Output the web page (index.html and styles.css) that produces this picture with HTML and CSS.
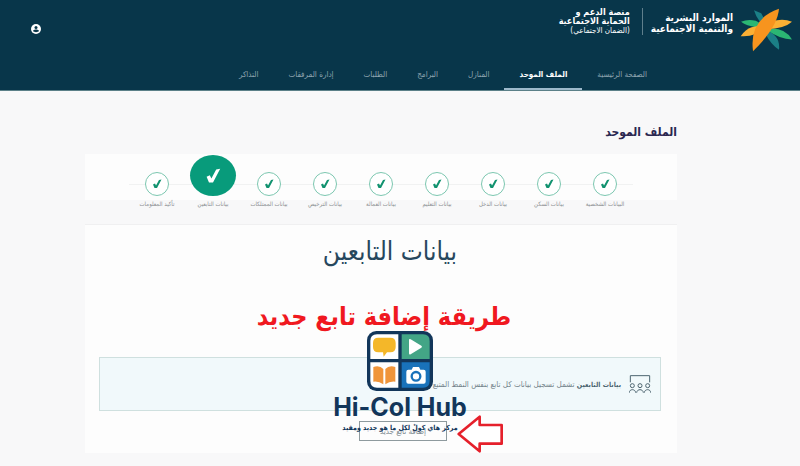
FILE: index.html
```
<!DOCTYPE html>
<html lang="ar" dir="rtl">
<head>
    <meta charset="UTF-8">
    <meta name="viewport" content="width=device-width, initial-scale=1.0">
    <title>الملف الموحد</title>
    <link rel="stylesheet" href="styles.css">
</head>
<body>
    <header class="header">
        <div class="top-bar">
            <div class="brand">
                <svg class="brand-logo" viewBox="0 0 152 124" aria-hidden="true">
                    <path fill="#1b7f86" d="M41 4 L62 13 L72 32 L58 38 Q46 22 41 4Z"/>
                    <path fill="#2bb673" d="M3 38 Q22 30 46 35 L66 46 L46 54 Q20 50 3 38Z"/>
                    <path fill="#fbb034" d="M2 80 Q16 60 34 54 L62 48 L46 74 Q24 82 2 80Z"/>
                    <path fill="#1b7f86" d="M84 66 Q118 82 114 120 Q90 104 76 76Z"/>
                    <path fill="#2bb673" d="M84 58 Q132 54 152 90 Q116 88 82 64Z"/>
                    <path fill="#fbb034" d="M92 38 Q124 26 152 38 Q130 58 78 60Z"/>
                    <path fill="#f7941e" d="M114 0 Q110 54 38 124 Q26 30 114 0Z"/>
                </svg>
                <p class="ministry">الموارد البشرية<br>والتنمية الاجتماعية</p>
                <p class="platform">منصة الدعم و<br>الحماية الاجتماعية<br><span>(الضمان الاجتماعي)</span></p>
            </div>
            <button class="account" type="button" aria-label="الحساب">
                <svg viewBox="0 0 20 20" aria-hidden="true">
                    <circle cx="10" cy="10" r="10" fill="#fff"/>
                    <circle cx="10" cy="7" r="3" fill="#08364a"/>
                    <path fill="#08364a" d="M4 14 C5 10 15 10 16 14 C14 17 6 17 4 14Z"/>
                </svg>
            </button>
        </div>
        <nav class="nav">
            <a href="#">الصفحة الرئيسية</a>
            <a href="#" class="active">الملف الموحد</a>
            <a href="#">المنازل</a>
            <a href="#">البرامج</a>
            <a href="#">الطلبات</a>
            <a href="#">إدارة المرفقات</a>
            <a href="#">التذاكر</a>
        </nav>
    </header>

    <svg class="symbols" aria-hidden="true">
        <symbol id="check" viewBox="0 0 20 20">
            <path d="M2 11 L6 9 L8 13 L14 2 L19 1 L10 18 L5 18Z"/>
        </symbol>
    </svg>

    <main class="main">
        <h1>الملف الموحد</h1>
        <div class="card">
            <ol class="steps">
                <li><span class="dot"><svg><use href="#check"/></svg></span>البيانات الشخصية</li>
                <li><span class="dot"><svg><use href="#check"/></svg></span>بيانات السكن</li>
                <li><span class="dot"><svg><use href="#check"/></svg></span>بيانات الدخل</li>
                <li><span class="dot"><svg><use href="#check"/></svg></span>بيانات التعليم</li>
                <li><span class="dot"><svg><use href="#check"/></svg></span>بيانات العمالة</li>
                <li><span class="dot"><svg><use href="#check"/></svg></span>بيانات الترخيص</li>
                <li><span class="dot"><svg><use href="#check"/></svg></span>بيانات الممتلكات</li>
                <li class="current"><span class="dot"><svg><use href="#check"/></svg></span>بيانات التابعين</li>
                <li><span class="dot"><svg><use href="#check"/></svg></span>تأكيد المعلومات</li>
            </ol>
            <section class="content">
                <h2>بيانات التابعين</h2>
                <p class="caption">طريقة إضافة تابع جديد</p>
                <div class="info">
                    <svg viewBox="0 0 66 54" fill="none" stroke="#4d6570" stroke-width="3" aria-hidden="true">
                        <path d="M4 22 V2 H62 V22"/>
                        <circle cx="10" cy="32" r="6"/>
                        <circle cx="33" cy="32" r="6"/>
                        <circle cx="56" cy="32" r="6"/>
                        <path d="M1 53 C1 41 19 41 20 53 M23 53 C24 41 42 41 43 53 M46 53 C47 41 65 41 65 53"/>
                    </svg>
                    <p><strong>بيانات التابعين</strong> تشمل تسجيل بيانات كل تابع بنفس النمط المتبع مع</p>
                </div>
                <div class="actions">
                    <svg class="arrow" viewBox="0 0 138 114" aria-hidden="true">
                        <path fill="#fff" stroke="#e5202b" stroke-width="8" stroke-linejoin="round" d="M5 57 L68 5 V30 H134 V86 H68 V109Z"/>
                    </svg>
                    <button class="add" type="button">إضافة تابع جديد</button>
                </div>
            </section>
        </div>
    </main>

    <div class="watermark">
        <svg viewBox="0 0 198 180" aria-hidden="true">
            <rect width="198" height="180" rx="28" fill="#12365a"/>
            <path fill="#fff" d="M30 10 H94 V84 H10 V30 Q10 10 30 10Z"/>
            <path fill="#43a586" d="M104 10 H168 Q188 10 188 30 V84 H104Z"/>
            <path fill="#fff" d="M10 94 H94 V170 H30 Q10 170 10 150Z"/>
            <path fill="#1972ba" d="M104 94 H188 V150 Q188 170 168 170 H104Z"/>
            <path fill="#f4b729" d="M34 20 H70 Q86 20 86 36 V48 Q86 64 70 64 H60 L50 77 L48 64 H34 Q18 64 18 48 V36 Q18 20 34 20Z"/>
            <path fill="#fff" d="M126 27 Q126 22 131 25 L163 44 Q167 47 163 50 L131 70 Q126 72 126 67Z"/>
            <path fill="#f0953a" d="M19 108 Q38 102 49 114 V160 Q36 150 19 152Z M85 108 Q66 102 55 114 V160 Q68 150 85 152Z"/>
            <path fill="#fff" d="M124 116 H134 L138 108 H156 L160 116 H170 Q176 116 176 122 V152 Q176 158 170 158 H124 Q118 158 118 152 V122 Q118 116 124 116Z"/>
            <circle cx="147" cy="136" r="13" fill="none" stroke="#1972ba" stroke-width="7"/>
        </svg>
        <p class="watermark-name" dir="ltr">Hi-Col Hub</p>
        <p class="watermark-tag">مركز هاي كولْ لكل ما هو جديد ومفيد</p>
    </div>
</body>
</html>
```

FILE: styles.css
```
* {
    box-sizing: border-box;
}

body {
    font-family: "DejaVu Sans Condensed", "DejaVu Sans", sans-serif;
    background-color: #f8f8f9;
    margin: 0;
    color: #12365a;
    position: relative;
}

h1, h2, p, ol {
    margin: 0;
    padding: 0;
}

.header {
    background-color: #08364a;
    border-bottom: 1px solid #5b8088;
    color: #fff;
}

.top-bar {
    display: flex;
    justify-content: space-between;
    align-items: flex-start;
    padding: 8px 8px 0 31px;
    height: 62px;
}

.brand {
    display: flex;
    align-items: flex-start;
}

.brand-logo {
    width: 52px;
    height: 44px;
}

.ministry {
    font-size: 10px;
    font-weight: bold;
    line-height: 11px;
    padding: 4px 7px 0 8px;
}

.platform {
    border-right: 1px solid #5f7f8c;
    font-size: 9px;
    font-weight: bold;
    line-height: 9px;
    padding-right: 12px;
}

.platform span {
    font-size: 8px;
    font-weight: normal;
}

.account {
    background: none;
    border: none;
    padding: 0;
    margin-top: 16px;
    width: 10px;
    height: 10px;
    display: flex;
    cursor: pointer;
}

.nav {
    display: flex;
    padding-right: 138px;
}

.nav a {
    color: #8fa5b0;
    font-size: 8px;
    line-height: 26px;
    padding: 0 15px;
    text-decoration: none;
    border-bottom: 2px solid transparent;
}

.nav a.active {
    color: #fff;
    font-weight: bold;
    border-bottom-color: #9db9cb;
}

.main {
    padding: 32px 123px 14px 85px;
}

h1 {
    color: #2a2750;
    font-size: 12px;
    line-height: 18px;
}

.card {
    background-color: #fdfdfd;
    margin-top: 13px;
}

.steps {
    display: flex;
    justify-content: center;
    align-items: flex-start;
    list-style: none;
    height: 71px;
    border-bottom: 1px solid #f0f0f1;
    background: linear-gradient(to bottom, #fdfdfd 46px, #f8f8f9 46px);
}

.steps li {
    width: 56px;
    display: flex;
    flex-direction: column;
    align-items: center;
    padding-top: 18px;
    color: #8b8f92;
    font-size: 6px;
    line-height: 16px;
    white-space: nowrap;
    background: linear-gradient(#f1f2f2, #f1f2f2) 0 30px / 100% 1px no-repeat;
}

.dot {
    width: 24px;
    height: 24px;
    border: 1px solid #7cc7b0;
    border-radius: 50%;
    background-color: #fff;
    display: flex;
    justify-content: center;
    align-items: center;
}

.dot svg {
    width: 10px;
    height: 10px;
    fill: #11926f;
}

.steps .current {
    padding-top: 1px;
}

.current .dot {
    width: 46px;
    height: 41px;
    border: none;
    background-color: #089b7b;
}

.current .dot svg {
    width: 16px;
    height: 16px;
    fill: #fff;
}

.symbols {
    display: none;
}

.content {
    padding: 8px 16px 0 14px;
    text-align: center;
}

h2 {
    color: #27475d;
    font-size: 26px;
    font-weight: normal;
    line-height: 36px;
    padding-left: 20px;
}

.caption {
    color: #f01820;
    font-size: 25px;
    font-weight: bold;
    line-height: 40px;
    margin-top: 28px;
    padding-left: 8px;
}

.info {
    display: flex;
    align-items: center;
    gap: 8px;
    height: 54px;
    margin-top: 20px;
    padding: 0 9px;
    background-color: #f1f9fb;
    border: 1px solid #cfe0df;
    color: #73838a;
    font-size: 8px;
    white-space: nowrap;
}

.info svg {
    width: 22px;
    height: 18px;
}

.info strong {
    color: #4d6570;
    font-size: 7px;
}

.actions {
    display: flex;
    justify-content: center;
    align-items: flex-start;
    gap: 10px;
    margin-top: 4px;
    padding-left: 102px;
}

.add {
    width: 88px;
    height: 20px;
    margin-top: 6px;
    padding: 0;
    background-color: #fdfdfd;
    border: 1px solid #8e9a9e;
    color: #7d8a90;
    font-family: inherit;
    font-size: 8px;
    cursor: pointer;
}

.arrow {
    width: 46px;
    height: 38px;
}

.watermark {
    position: absolute;
    top: 331px;
    left: 0;
    right: 0;
    display: flex;
    flex-direction: column;
    align-items: center;
    pointer-events: none;
}

.watermark svg {
    width: 66px;
    height: 60px;
}

.watermark-name {
    font-family: Inter, sans-serif;
    font-size: 25px;
    font-weight: bold;
    line-height: 32px;
}

.watermark-tag {
    font-size: 7px;
    font-weight: bold;
    line-height: 10px;
}
```
